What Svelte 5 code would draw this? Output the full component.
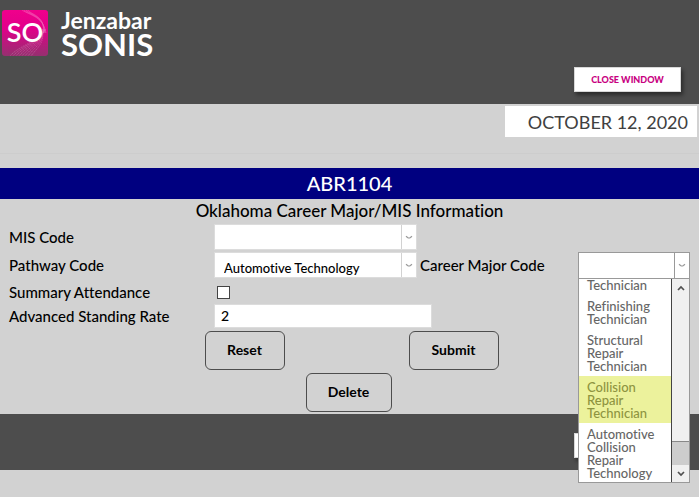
<script>
  let misCode = $state('');
  let pathway = $state('Automotive Technology');
  let careerMajor = $state('');
  let attendance = $state(false);
  let rate = $state('2');

  const majors = [
    'Technician',
    'Refinishing Technician',
    'Structural Repair Technician',
    'Collision Repair Technician',
    'Automotive Collision Repair Technology'
  ];
  let active = $state(3);

  // Offsets for the fan of fine lines in the logo tile.
  const waves = [0, 1, 2, 3, 4, 5, 6, 7];
</script>

{#snippet chevron()}
  <svg class="chevron" width="8" height="5" viewBox="0 0 8 5" aria-hidden="true">
    <path d="M1 1.2 L3.2 3 H4.8 L7 1.2" fill="none" stroke="#999" stroke-width="1.2" />
  </svg>
{/snippet}

<div class="page">
  <header class="band top">
    <div class="brand">
      <svg class="tile" width="48" height="48" viewBox="0 0 48 48" aria-label="SO">
        <defs>
          <linearGradient id="pink" x1="0" y1="0" x2="0" y2="1">
            <stop offset="0" stop-color="#f0008c" />
            <stop offset="0.4" stop-color="#e2008a" />
            <stop offset="1" stop-color="#963070" />
          </linearGradient>
          <clipPath id="round"><rect x="1" y="1" width="46" height="46" rx="3" /></clipPath>
        </defs>
        <rect x="1" y="1" width="46" height="46" rx="3" fill="url(#pink)" />
        <g clip-path="url(#round)" fill="none" stroke="#fff" stroke-width="0.5" opacity="0.4">
          {#each waves as w}
            <path d="M{8 + w * 3} 48 C{18 + w * 3} 36 {36 + w} 34 {45 - w * 0.5} 20" stroke-dasharray="1.5 0.7" />
          {/each}
          {#each waves.slice(0, 4) as w}
            <path d="M{20 + w * 2} 0 C{26 + w} 6 {42 + w} 6 {45 - w} 24" />
          {/each}
        </g>
        <text x="24" y="33" text-anchor="middle" class="so">SO</text>
      </svg>
      <div class="words">
        <span class="jenzabar">Jenzabar</span>
        <span class="sonis">SONIS</span>
      </div>
    </div>
    <button class="close" type="button">CLOSE WINDOW</button>
  </header>

  <div class="date-row"><div class="date">OCTOBER 12, 2020</div></div>

  <main>
    <h1>ABR1104</h1>
    <h2>Oklahoma Career Major/MIS Information</h2>

    <form onsubmit={(e) => e.preventDefault()}>
      <div class="row">
        <label class="name" for="mis">MIS Code</label>
        <div class="select">
          <select id="mis" bind:value={misCode}><option value=""></option></select>
          {@render chevron()}
        </div>
      </div>
      <div class="row">
        <label class="name" for="pathway">Pathway Code</label>
        <div class="select">
          <select id="pathway" bind:value={pathway}><option>Automotive Technology</option></select>
          {@render chevron()}
        </div>
        <label class="second" for="major">Career Major Code</label>
        <div class="select open">
          <select id="major" bind:value={careerMajor}>
            <option value=""></option>
            {#each majors as m}<option>{m}</option>{/each}
          </select>
          {@render chevron()}
          <div class="menu">
            <ul role="listbox" aria-label="Career Major Code">
              {#each majors as m, i}
                <li role="option" aria-selected={i === active} class:active={i === active}>{m}</li>
              {/each}
            </ul>
            <div class="scrollbar" aria-hidden="true">
              <div class="arrow">
                <svg width="8" height="6" viewBox="0 0 8 6"><path d="M1 5 L4 2 L7 5" fill="none" stroke="#505050" stroke-width="1.7" /></svg>
              </div>
              <div class="track"></div>
              <div class="thumb"></div>
              <div class="arrow">
                <svg width="8" height="6" viewBox="0 0 8 6"><path d="M1 1 L4 4 L7 1" fill="none" stroke="#505050" stroke-width="1.7" /></svg>
              </div>
            </div>
          </div>
        </div>
      </div>
      <div class="row short toggle">
        <label class="name" for="attendance">Summary Attendance</label>
        <input id="attendance" type="checkbox" bind:checked={attendance} />
      </div>
      <div class="row short">
        <label class="name" for="rate">Advanced Standing Rate</label>
        <input id="rate" type="text" bind:value={rate} />
      </div>
      <div class="actions">
        <div class="pair">
          <button type="reset" class="reset">Reset</button>
          <button type="submit">Submit</button>
        </div>
        <button type="button" class="delete">Delete</button>
      </div>
    </form>
  </main>

  <footer class="band bottom">
    <button class="close" type="button" aria-label="Close window"></button>
  </footer>
</div>

<style>
  :global(body) {
    margin: 0;
    background: #d2d2d2;
  }
  .page {
    font-family: Lato, "Open Sans", sans-serif;
    font-variant-ligatures: none;
    color: #000;
    min-height: 100vh;
    background: #d2d2d2;
    overflow: hidden;
  }
  * {
    box-sizing: border-box;
  }
  .band {
    display: flex;
    justify-content: space-between;
    align-items: flex-end;
    background: #4d4d4d;
    padding: 9px 18px 12px 1px;
  }
  .top {
    min-height: 104px;
  }
  .brand {
    display: flex;
    align-self: flex-start;
    gap: 12px;
  }
  .so {
    font-family: Lato, sans-serif;
    font-size: 27px;
    font-weight: 600;
    fill: #fff;
  }
  .words {
    display: flex;
    flex-direction: column;
    color: #fff;
    font-weight: 700;
  }
  .jenzabar {
    font-size: 23px;
    line-height: 22px;
  }
  .sonis {
    font-size: 31px;
    line-height: 27px;
  }
  .close {
    width: 107px;
    height: 25px;
    padding: 0;
    border: 1px solid #d8d8d8;
    background: #fff;
    box-shadow: 2px 3px 4px rgba(0, 0, 0, 0.45);
    color: #c8007f;
    font: 900 9px Lato, sans-serif;
  }
  .bottom {
    justify-content: flex-end;
    min-height: 56px;
  }
  .date-row {
    display: flex;
    justify-content: flex-end;
    padding: 2px 2px 16px;
    border-bottom: 1px solid #cdcdcd;
    margin-bottom: 14px;
  }
  .date {
    width: 192px;
    padding: 1px 9px 0 0;
    background: #fff;
    color: #404040;
    font-size: 18px;
    line-height: 30px;
    text-align: right;
  }
  h1 {
    margin: 0;
    background: #000080;
    color: #fff;
    font-size: 20px;
    font-weight: 500;
    line-height: 31px;
    text-align: center;
  }
  h2 {
    margin: 0;
    font-size: 17px;
    font-weight: 500;
    line-height: 24px;
    text-align: center;
  }
  form {
    padding: 0 9px;
  }
  .row {
    display: flex;
    align-items: center;
    height: 28px;
    font-size: 15px;
    font-weight: 500;
  }
  .short {
    height: 24px;
  }
  .toggle {
    margin-top: 1px;
  }
  .name {
    width: 205px;
    flex: none;
  }
  .second {
    margin-left: 3px;
    flex: 1;
  }
  .select {
    position: relative;
    width: 203px;
    height: 26px;
    flex: none;
    background: #fff;
    border: 1px solid #dcdcdc;
  }
  .select select {
    appearance: none;
    width: 100%;
    height: 100%;
    margin: 0;
    padding: 5px 22px 0 9px;
    border: 0;
    background: linear-gradient(#d2d2d2, #d2d2d2) right 14px top / 1px 100% no-repeat;
    color: #000;
    font: 500 13px Lato, sans-serif;
    font-variant-ligatures: none;
  }
  .chevron {
    position: absolute;
    right: 3px;
    top: 10px;
    pointer-events: none;
  }
  .open {
    align-self: flex-end;
    width: 112px;
    height: 27px;
    border-color: #999;
  }
  .open select {
    background-image: linear-gradient(#999, #999);
  }
  .menu {
    position: absolute;
    z-index: 2;
    top: 100%;
    left: -1px;
    right: -1px;
    height: 205px;
    display: flex;
    border: 1px solid #999;
    background: #fff;
    overflow: hidden;
  }
  ul {
    flex: 1;
    height: 100%;
    margin: 0;
    padding: 0;
    list-style: none;
    overflow: hidden;
    color: #666;
    font-size: 13px;
    font-weight: 500;
    line-height: 13px;
  }
  li {
    padding: 5px 12px 3px 8px;
  }
  li:first-child {
    padding-top: 0;
  }
  .active {
    background: #ecf29c;
    color: #8e9440;
  }
  .scrollbar {
    display: flex;
    flex-direction: column;
    width: 18px;
    border-left: 1px solid #444;
    background: #f0f0f0;
  }
  .arrow {
    display: grid;
    place-items: center;
    height: 17px;
  }
  .track {
    flex: 1;
  }
  .thumb {
    height: 24px;
    border-top: 1px solid #888;
    background: #cdcdcd;
  }
  input[type="checkbox"] {
    appearance: none;
    width: 13px;
    height: 13px;
    margin: 0 0 0 3px;
    border: 1px solid #444;
    background: #fff;
  }
  input[type="checkbox"]:checked {
    background: #444;
  }
  input[type="text"] {
    width: 218px;
    height: 24px;
    padding: 0 6px 2px;
    border: 1px solid #dcdcdc;
    background: #fff;
    font: 500 14px Lato, sans-serif;
  }
  .actions {
    display: flex;
    flex-direction: column;
    align-items: center;
    gap: 3px;
    padding: 3px 2px 2px 0;
  }
  .pair {
    display: flex;
    gap: 124px;
    padding-left: 6px;
  }
  .actions button {
    width: 90px;
    height: 39px;
    padding: 0 0 2px;
    border: 1px solid #4d4d4d;
    border-radius: 6px;
    background: transparent;
    color: #000;
    font: 700 14px Lato, sans-serif;
  }
  .actions .reset {
    width: 80px;
  }
  .actions .delete {
    width: 86px;
  }
</style>
